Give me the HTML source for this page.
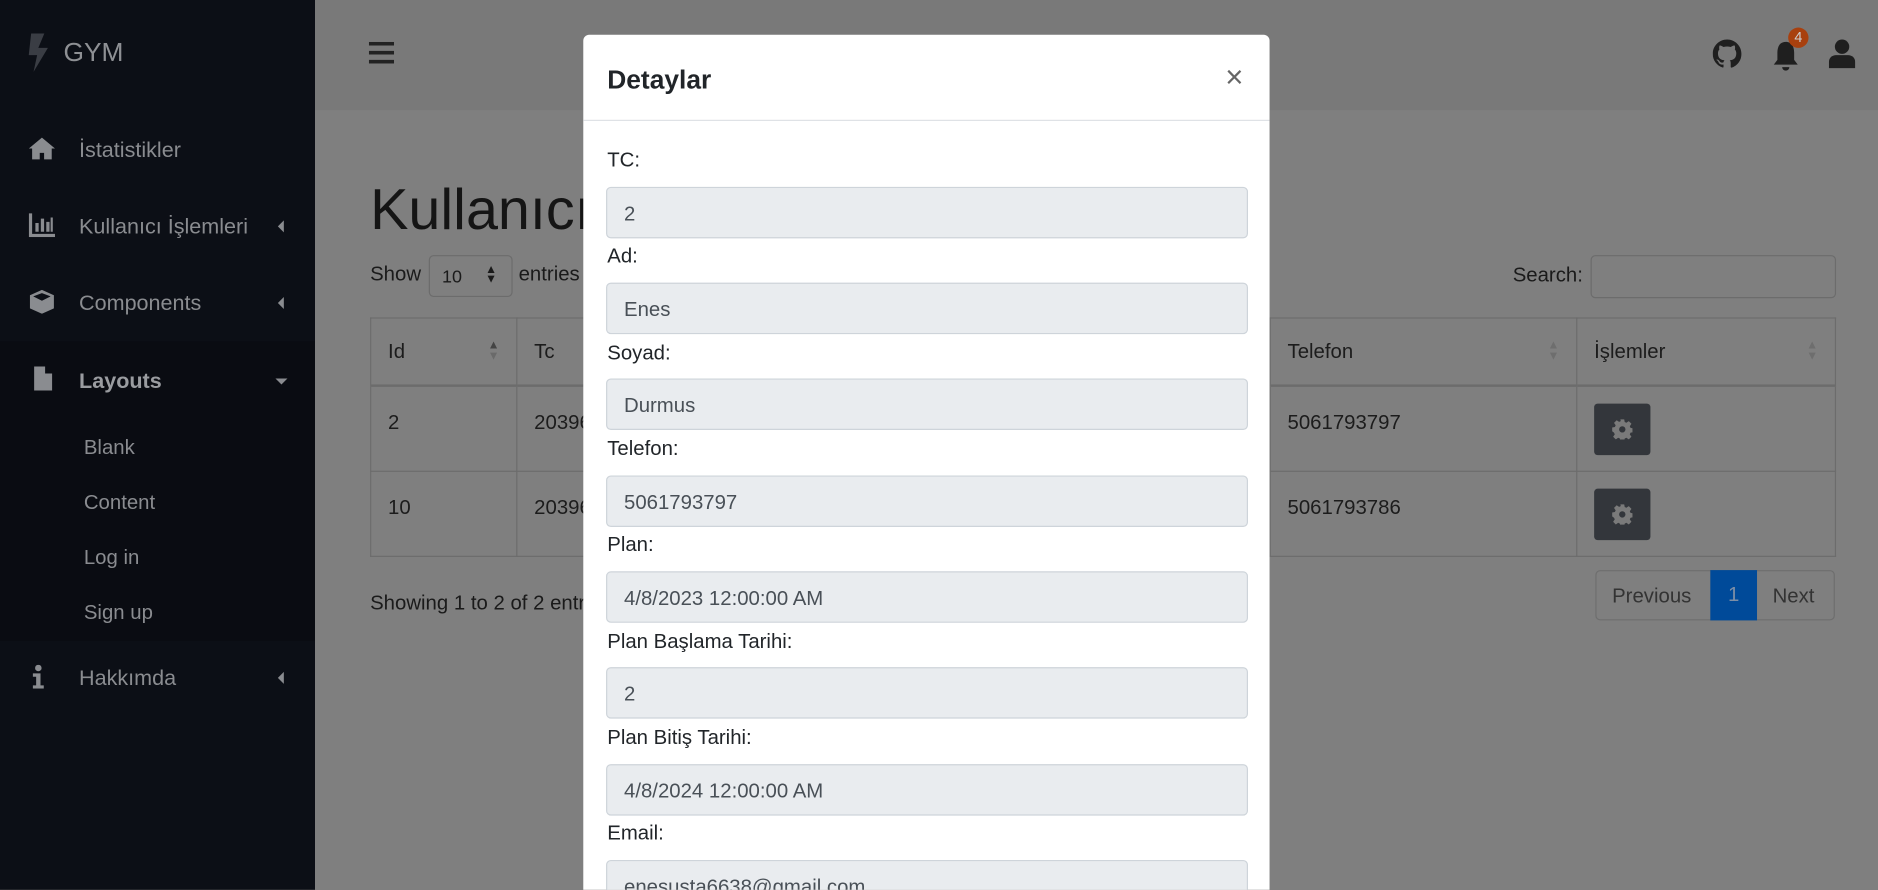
<!DOCTYPE html>
<html><head><meta charset="utf-8"><style>
html,body{margin:0;padding:0;width:1878px;height:890px;overflow:hidden;background:#7f7f7f}
#w{position:absolute;left:0;top:0;width:1568px;height:743px;overflow:hidden;transform:scale(1.19770);transform-origin:0 0;font-family:"Liberation Sans",sans-serif;color:#1a1a1a}
.a{position:absolute}
.sb{left:0;top:0;width:263px;height:743px;background:#0c0f16}
.mi{position:absolute;left:66px;font-size:18px;color:#8a8c90}
.ic{position:absolute;left:24px;width:22px;height:20px;fill:#8a8c90}
.car{position:absolute;left:232px;width:0;height:0;border-top:5px solid transparent;border-bottom:5px solid transparent;border-right:5px solid #8a8c90}
.sub{position:absolute;left:70px;font-size:17px;color:#8a8c90}
.hdr{left:263px;top:0;width:1305px;height:92px;background:#797979}
table{position:absolute;left:309px;top:265px;width:1224px;border-collapse:collapse;font-size:17px;color:#1c1c1c}
td,th{border:1px solid #6c6c6c;text-align:left;font-weight:normal;padding:0 14px;vertical-align:top}
th{height:55px;vertical-align:middle;border-bottom:2px solid #6c6c6c}
td{height:71px;padding-top:20px;box-sizing:border-box}
.gb{display:inline-block;width:47px;height:43px;background:#33363b;border-radius:3px;margin-top:-6px;position:relative}
.modal{left:487px;top:29px;width:573px;height:714px;background:#fff;border-radius:5px 5px 0 0;overflow:hidden}
.lbl{position:absolute;left:20px;font-size:17px;color:#212529}
.inp{position:absolute;left:19px;width:536px;height:43px;background:#e9ecef;border:1px solid #ced4da;border-radius:4px;box-sizing:border-box;font-size:17px;color:#495057;padding:12px 14px}
</style></head><body><div id="w">
<div class="a sb">
 <svg class="a" style="left:22px;top:28px" width="20" height="32" viewBox="0 0 20 32"><path d="M4 0h11l-5 12h8L6 32l3-14H2z" fill="#3a3d44"/></svg>
 <div class="a" style="left:53px;top:31px;font-size:22px;color:#8e9094">GYM</div>
 <svg class="ic" style="top:114px" viewBox="0 0 24 22"><path d="M12 1L0 11h3v10h7v-6h4v6h7V11h3z"/></svg>
 <div class="mi" style="top:115px">İstatistikler</div>
 <svg class="ic" style="top:178px" viewBox="0 0 24 22"><path d="M0 0h3v19h21v3H0zM6 9h3v8H6zM11 5h3v12h-3zM16 8h3v9h-3zM20 4h2v13h-2z"/></svg>
 <div class="mi" style="top:179px">Kullanıcı İşlemleri</div><div class="car" style="top:184px"></div>
 <svg class="ic" style="top:242px" viewBox="0 0 24 22"><path d="M12 0l11 5v12l-11 5-11-5V5zM4 6l8 4 8-4-8-3z"/></svg>
 <div class="mi" style="top:243px">Components</div><div class="car" style="top:248px"></div>
 <div class="a" style="left:0;top:285px;width:263px;height:250px;background:#0a0c12"></div>
 <svg class="ic" style="top:306px;left:25px" viewBox="0 0 18 24"><path d="M0 0h11l7 7v17H0zM11 0v7h7z"/></svg>
 <div class="mi" style="top:308px;font-weight:bold;color:#9a9ca0">Layouts</div>
 <div class="a" style="left:230px;top:316px;border-left:5px solid transparent;border-right:5px solid transparent;border-top:5px solid #8a8c90"></div>
 <div class="sub" style="top:364px">Blank</div><div class="sub" style="top:410px">Content</div><div class="sub" style="top:456px">Log in</div><div class="sub" style="top:502px">Sign up</div>
 <svg class="ic" style="top:555px;left:27px;width:10px" viewBox="0 0 10 22"><circle cx="5" cy="3" r="3"/><path d="M0 8h7v11h3v3H0v-3h3v-8H0z"/></svg>
 <div class="mi" style="top:556px">Hakkımda</div><div class="car" style="top:561px"></div>
</div>
<div class="a hdr"></div>
<svg class="a" style="left:308px;top:35px" width="21" height="18"><rect y="0" width="21" height="3" fill="#222"/><rect y="7.5" width="21" height="3" fill="#222"/><rect y="15" width="21" height="3" fill="#222"/></svg>
<svg class="a" style="left:1430px;top:33px" width="24" height="24" viewBox="0 0 16 16"><path fill="#1f1f1f" d="M8 0C3.58 0 0 3.58 0 8c0 3.54 2.29 6.53 5.47 7.59.4.07.55-.17.55-.38v-1.33c-2.23.48-2.7-1.07-2.7-1.07-.36-.92-.89-1.17-.89-1.17-.73-.5.06-.49.06-.49.8.06 1.23.83 1.23.83.71 1.22 1.870.87 2.33.66.07-.52.28-.87.51-1.07-1.78-.2-3.64-.89-3.64-3.95 0-.87.31-1.59.82-2.15-.08-.2-.36-1.02.08-2.12 0 0 .67-.21 2.2.82.64-.18 1.32-.27 2-.27s1.36.09 2 .27c1.53-1.04 2.2-.82 2.2-.82.44 1.1.16 1.92.08 2.12.51.56.82 1.27.82 2.15 0 3.07-1.87 3.75-3.65 3.95.29.25.54.73.54 1.48v2.2c0 .21.15.46.55.38A8.01 8.01 0 0016 8c0-4.42-3.58-8-8-8z"/></svg>
<svg class="a" style="left:1479px;top:33px" width="24" height="28" viewBox="0 0 24 28"><path fill="#1f1f1f" d="M12 2c-5 0-7 4-7 9v6l-3 4h20l-3-4v-6c0-5-2-9-7-9zM9 23h6a3 3 0 01-6 0z"/></svg>
<div class="a" style="left:1493px;top:23px;width:17px;height:17px;border-radius:50%;background:#a8400e;color:#ccc;font-size:12px;text-align:center;line-height:17px">4</div>
<svg class="a" style="left:1527px;top:33px" width="22" height="24" viewBox="0 0 22 24"><circle cx="11" cy="6" r="6" fill="#1f1f1f"/><path d="M0 24v-5c0-4 3-6 6-6h10c3 0 6 2 6 6v5z" fill="#1f1f1f"/></svg>
<div class="a" style="left:309px;top:148px;font-size:48px;font-weight:300;color:#151515">Kullanıcı</div>
<div class="a" style="left:309px;top:219px;font-size:17px">Show</div>
<div class="a" style="left:358px;top:213px;width:70px;height:35px;border:1px solid #6c6c6c;border-radius:4px;box-sizing:border-box;font-size:15px;padding:9px 10px">10<span style="position:absolute;left:46px;top:8px;font-size:10px;line-height:8px">▲<br>▼</span></div>
<div class="a" style="left:433px;top:219px;font-size:17px">entries</div>
<div class="a" style="left:1263px;top:220px;font-size:17px">Search:</div>
<div class="a" style="left:1328px;top:213px;width:205px;height:36px;border:1px solid #6c6c6c;border-radius:4px;box-sizing:border-box"></div>
<table><tr><th style="width:93px">Id<span style="float:right;font-size:10px;line-height:9px;color:#444">▲<br><span style="color:#6a6a6a">▼</span></span></th><th style="width:600px">Tc</th><th style="width:227px">Telefon<span style="float:right;color:#6e6e6e;font-size:10px;line-height:9px">▲<br>▼</span></th><th>İşlemler<span style="float:right;color:#6e6e6e;font-size:10px;line-height:9px">▲<br>▼</span></th></tr>
<tr><td>2</td><td>20396</td><td>5061793797</td><td><span class="gb"><svg class="a" style="left:15px;top:13px" width="17" height="17" viewBox="0 0 16 16"><path fill="#7a7a7a" d="M6.5 0h3l.4 2.2 1.3.6 1.9-1.3 2.1 2.1-1.3 1.9.6 1.3 2.2.4v3l-2.2.4-.6 1.3 1.3 1.9-2.1 2.1-1.9-1.3-1.3.6-.4 2.2h-3l-.4-2.2-1.3-.6-1.9 1.3-2.1-2.1 1.3-1.9-.6-1.3L0 9.5v-3l2.2-.4.6-1.3-1.3-1.9 2.1-2.1 1.9 1.3 1.3-.6zM8 5.5a2.5 2.5 0 100 5 2.5 2.5 0 000-5z"/></svg></span></td></tr>
<tr><td>10</td><td>20396</td><td>5061793786</td><td><span class="gb"><svg class="a" style="left:15px;top:13px" width="17" height="17" viewBox="0 0 16 16"><path fill="#7a7a7a" d="M6.5 0h3l.4 2.2 1.3.6 1.9-1.3 2.1 2.1-1.3 1.9.6 1.3 2.2.4v3l-2.2.4-.6 1.3 1.3 1.9-2.1 2.1-1.9-1.3-1.3.6-.4 2.2h-3l-.4-2.2-1.3-.6-1.9 1.3-2.1-2.1 1.3-1.9-.6-1.3L0 9.5v-3l2.2-.4.6-1.3-1.3-1.9 2.1-2.1 1.9 1.3 1.3-.6zM8 5.5a2.5 2.5 0 100 5 2.5 2.5 0 000-5z"/></svg></span></td></tr></table>
<div class="a" style="left:309px;top:494px;font-size:17px">Showing 1 to 2 of 2 entries</div>
<div class="a" style="left:1332px;top:476px;width:200px;height:42px;border:1px solid #6e6e6e;border-radius:4px;box-sizing:border-box"></div>
<div class="a" style="left:1346px;top:488px;font-size:17px;color:#333">Previous</div>
<div class="a" style="left:1428px;top:476px;width:39px;height:42px;background:#004a99;color:#7c8ea6;font-size:17px;text-align:center;line-height:42px">1</div>
<div class="a" style="left:1480px;top:488px;font-size:17px;color:#333">Next</div>
<div class="a modal">
 <div class="a" style="left:20px;top:25px;font-size:22px;font-weight:bold;color:#212529">Detaylar</div>
 <div class="a" style="left:536px;top:20px;font-size:26px;color:#666">×</div>
 <div class="a" style="left:0;top:71px;width:573px;height:1px;background:#dee2e6"></div>
 <div class="lbl" style="top:95px">TC:</div><div class="inp" style="top:127px">2</div>
 <div class="lbl" style="top:175px">Ad:</div><div class="inp" style="top:207px">Enes</div>
 <div class="lbl" style="top:256px">Soyad:</div><div class="inp" style="top:287px">Durmus</div>
 <div class="lbl" style="top:336px">Telefon:</div><div class="inp" style="top:368px">5061793797</div>
 <div class="lbl" style="top:416px">Plan:</div><div class="inp" style="top:448px">4/8/2023 12:00:00 AM</div>
 <div class="lbl" style="top:497px">Plan Başlama Tarihi:</div><div class="inp" style="top:528px">2</div>
 <div class="lbl" style="top:577px">Plan Bitiş Tarihi:</div><div class="inp" style="top:609px">4/8/2024 12:00:00 AM</div>
 <div class="lbl" style="top:657px">Email:</div><div class="inp" style="top:689px">enesusta6638@gmail.com</div>
</div>
</div></body></html>
